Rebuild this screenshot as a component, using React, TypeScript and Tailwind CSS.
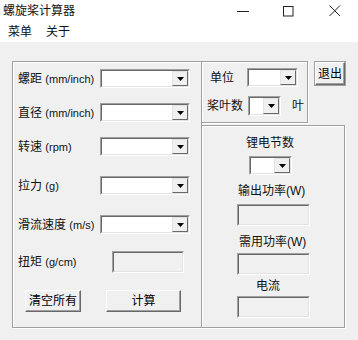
const font = "font-['Liberation_Sans','Noto_Sans_CJK_SC',sans-serif]";

function Arrow() {
  return (
    <svg width="7" height="4" viewBox="0 0 7 4">
      <polygon points="0,0 7,0 3.5,4" fill="#000" />
    </svg>
  );
}

function Combo({ className = "" }: { className?: string }) {
  return (
    <div
      className={`flex h-[19px] border border-t-[#a0a0a0] border-l-[#a0a0a0] border-b-white border-r-white ${className}`}
    >
      <div className="flex flex-1 border border-t-[#696969] border-l-[#696969] border-b-[#e3e3e3] border-r-[#e3e3e3] bg-white">
        <div className="flex-1" />
        <div className="flex w-[16px] items-center justify-center border border-t-[#e3e3e3] border-l-[#e3e3e3] border-b-[#696969] border-r-[#696969] bg-[#f0f0f0]">
          <Arrow />
        </div>
      </div>
    </div>
  );
}

function TextBox({ className = "" }: { className?: string }) {
  return (
    <div
      className={`h-[22px] border border-t-[#a0a0a0] border-l-[#a0a0a0] border-b-white border-r-white ${className}`}
    >
      <div className="h-full border border-t-[#696969] border-l-[#696969] border-b-[#e3e3e3] border-r-[#e3e3e3] bg-[#f0f0f0]" />
    </div>
  );
}

function Button({ label, className = "" }: { label: string; className?: string }) {
  return (
    <div
      className={`flex items-center justify-center border border-t-white border-l-white border-b-[#696969] border-r-[#696969] bg-[#f0f0f0] text-[12px] text-black shadow-[inset_-1px_-1px_0_#a0a0a0] ${className}`}
    >
      {label}
    </div>
  );
}

function Row({ label, unit, className = "" }: { label: string; unit: string; className?: string }) {
  return (
    <div className={`flex items-center ${className}`}>
      <div className="w-[87px] pl-[5px] text-[12px] leading-[16px] whitespace-nowrap">
        {label} <span className="text-[11px]">{unit}</span>
      </div>
      <Combo className="w-[90px]" />
    </div>
  );
}

const etched = "border-[#a0a0a0] shadow-[inset_1px_1px_0_#fff,1px_1px_0_#fff]";

export default function App() {
  return (
    <div className={`flex h-[340px] w-[358px] flex-col bg-[#f0f0f0] text-[#111] ${font}`}>
      {/* title bar */}
      <div className="flex h-[22px] items-center bg-white">
        <span className="pl-[3px] text-[12px] leading-[16px]">螺旋桨计算器</span>
        <div className="ml-auto flex items-center">
          <svg width="13" height="12" viewBox="0 0 13 12" className="mr-[33px]">
            <line x1="0" y1="6.5" x2="12" y2="6.5" stroke="#222" strokeWidth="1" />
          </svg>
          <svg width="11" height="11" viewBox="0 0 11 11" className="mr-[35px]">
            <rect x="0.5" y="0.5" width="9.5" height="9.5" fill="none" stroke="#222" strokeWidth="1" />
          </svg>
          <svg width="12" height="12" viewBox="0 0 12 12" className="mr-[17px]">
            <path d="M0.5 0.5 L11 11 M11 0.5 L0.5 11" stroke="#222" strokeWidth="1" />
          </svg>
        </div>
      </div>
      {/* menu bar */}
      <div className="flex h-[20px] items-center gap-[14px] bg-white pl-[8px] text-[12px]">
        <span>菜单</span>
        <span>关于</span>
      </div>

      {/* body */}
      <div className="flex pl-[12px] pt-[19px]">
        {/* left group */}
        <div className={`flex h-[267px] w-[190px] flex-col border ${etched}`}>
          <Row label="螺距" unit="(mm/inch)" className="mt-[7px]" />
          <Row label="直径" unit="(mm/inch)" className="mt-[15px]" />
          <Row label="转速" unit="(rpm)" className="mt-[15px]" />
          <Row label="拉力" unit="(g)" className="mt-[20px]" />
          <Row label="滑流速度" unit="(m/s)" className="mt-[20px]" />
          <div className="mt-[17px] flex items-center">
            <div className="w-[99px] pl-[5px] text-[12px] whitespace-nowrap">
              扭矩 <span className="text-[11px]">(g/cm)</span>
            </div>
            <TextBox className="w-[72px]" />
          </div>
          <div className="mt-[17px] flex">
            <Button label="清空所有" className="ml-[12px] h-[22px] w-[56px]" />
            <Button label="计算" className="ml-[25px] h-[22px] w-[75px]" />
          </div>
        </div>

        {/* right side */}
        <div className="flex w-[144px] flex-col">
          <div className="flex">
            <div className={`h-[62px] w-[106px] border border-l-0 ${etched}`}>
              <div className="mt-[6px] flex items-center">
                <span className="ml-[8px] w-[37px] text-[12px]">单位</span>
                <Combo className="w-[51px]" />
              </div>
              <div className="mt-[9px] flex items-center">
                <span className="ml-[5px] w-[41px] text-[12px]">桨叶数</span>
                <Combo className="h-[20px] w-[33px]" />
                <span className="ml-[11px] text-[12px]">叶</span>
              </div>
            </div>
            <Button label="退出" className="ml-[7px] mt-px h-[23px] w-[30px] outline outline-1 outline-[#a0a0a0]" />
          </div>

          <div className={`mt-[2px] flex h-[203px] w-[143px] flex-col border border-l-0 ${etched}`}>
            <span className="ml-[44px] mt-[9px] text-[12px] leading-[16px]">锂电节数</span>
            <Combo className="ml-[47px] mt-[5px] w-[43px]" />
            <span className="ml-[36px] mt-[8px] text-[12px] leading-[16px]">输出功率(W)</span>
            <TextBox className="ml-[35px] mt-[5px] w-[73px]" />
            <span className="ml-[37px] mt-[8px] text-[12px] leading-[16px]">需用功率(W)</span>
            <TextBox className="ml-[35px] mt-[3px] w-[73px]" />
            <span className="ml-[54px] mt-[3px] text-[12px] leading-[16px]">电流</span>
            <TextBox className="ml-[35px] mt-[2px] w-[73px]" />
          </div>
        </div>
      </div>
    </div>
  );
}
